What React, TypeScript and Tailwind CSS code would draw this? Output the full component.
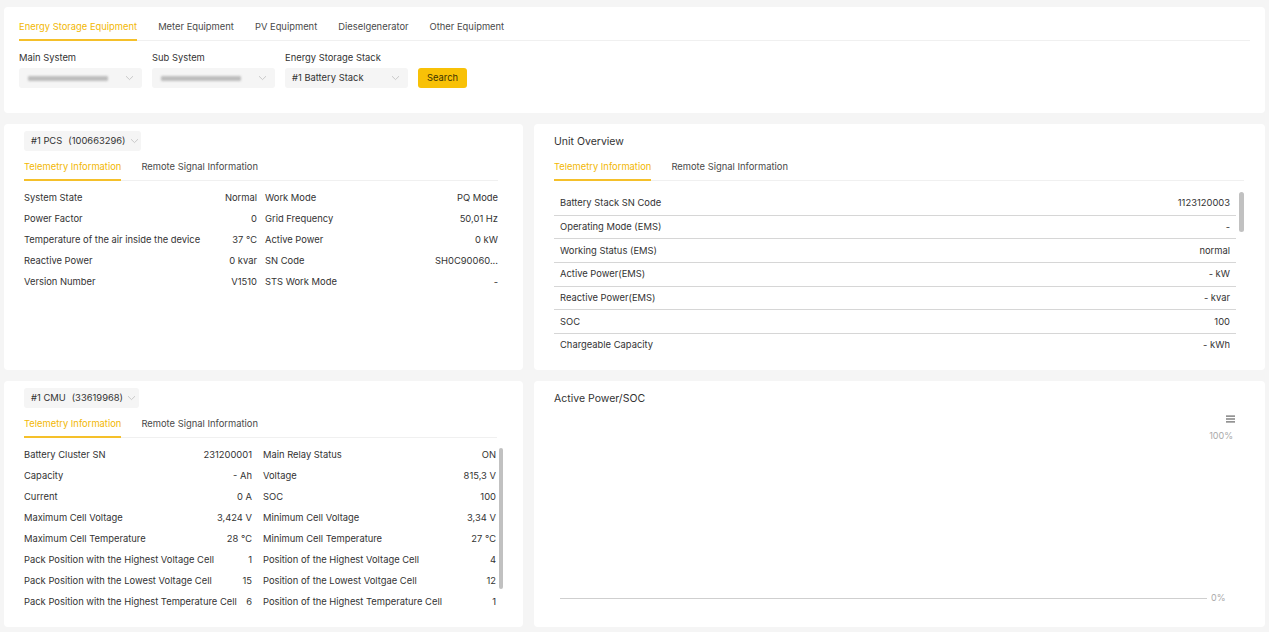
import React from "react";

const F = { fontFamily: "Inter, 'Noto Sans', sans-serif" };

function Chevron() {
  return (
    <svg width="9" height="6" viewBox="0 0 9 6" className="shrink-0">
      <path d="M1 1.2 L4.5 4.6 L8 1.2" fill="none" stroke="#c4c4c4" strokeWidth="0.9" />
    </svg>
  );
}

function Tabs({ items, active, gap = 20, className = "" }: { items: string[]; active: number; gap?: number; className?: string }) {
  return (
    <div className={"flex border-b border-[#f0f0f0] " + className} style={{ gap }}>
      {items.map((t, i) => (
        <div
          key={t}
          className={
            "pb-[6px] leading-[13px] text-[9.4px] whitespace-nowrap border-b-2 -mb-px " +
            (i === active ? "text-[#f2b705] border-[#f5c02a]" : "text-[#4a4a4a] border-transparent")
          }
        >
          {t}
        </div>
      ))}
    </div>
  );
}

function BlurSelect() {
  return (
    <div className="w-[123px] h-[20px] bg-[#f5f5f5] rounded-[3px] flex items-center justify-between pl-[9px] pr-[8px]">
      <div className="w-[80px] h-[5px] bg-[#bdbdbd] blur-[1.2px] rounded-[1px]" />
      <Chevron />
    </div>
  );
}

type Pair = [string, string];

function TwoCol({ rows, leftW, rightW, gap }: { rows: [Pair, Pair][]; leftW: number; rightW: number; gap: number }) {
  return (
    <div className="flex flex-col">
      {rows.map(([a, b], i) => (
        <div key={i} className="flex h-[21px] shrink-0 items-center text-[9.4px] text-[#333] whitespace-nowrap" style={{ gap }}>
          <div className="flex justify-between" style={{ width: leftW }}>
            <span>{a[0]}</span>
            <span>{a[1]}</span>
          </div>
          <div className="flex justify-between" style={{ width: rightW }}>
            <span>{b[0]}</span>
            <span>{b[1]}</span>
          </div>
        </div>
      ))}
    </div>
  );
}

function DeviceSelect({ name, code, w }: { name: string; code: string; w: number }) {
  return (
    <div
      className="flex h-[20px] bg-[#f5f5f5] rounded-[3px] items-center justify-between pl-[7px] pr-[8px] text-[9.4px] text-[#333] whitespace-nowrap"
      style={{ width: w }}
    >
      <span>
        {name}
        <span className="ml-[6px]">(</span>
        {code}
        <span className="mr-[4px]">)</span>
      </span>
      <Chevron />
    </div>
  );
}

export default function App() {
  const pcsRows: [Pair, Pair][] = [
    [["System State", "Normal"], ["Work Mode", "PQ Mode"]],
    [["Power Factor", "0"], ["Grid Frequency", "50,01 Hz"]],
    [["Temperature of the air inside the device", "37 ℃"], ["Active Power", "0 kW"]],
    [["Reactive Power", "0 kvar"], ["SN Code", "SH0C90060..."]],
    [["Version Number", "V1510"], ["STS Work Mode", "-"]],
  ];
  const cmuRows: [Pair, Pair][] = [
    [["Battery Cluster SN", "231200001"], ["Main Relay Status", "ON"]],
    [["Capacity", "- Ah"], ["Voltage", "815,3 V"]],
    [["Current", "0 A"], ["SOC", "100"]],
    [["Maximum Cell Voltage", "3,424 V"], ["Minimum Cell Voltage", "3,34 V"]],
    [["Maximum Cell Temperature", "28 ℃"], ["Minimum Cell Temperature", "27 ℃"]],
    [["Pack Position with the Highest Voltage Cell", "1"], ["Position of the Highest Voltage Cell", "4"]],
    [["Pack Position with the Lowest Voltage Cell", "15"], ["Position of the Lowest Voltgae Cell", "12"]],
    [["Pack Position with the Highest Temperature Cell", "6"], ["Position of the Highest Temperature Cell", "1"]],
  ];
  const unitRows: Pair[] = [
    ["Battery Stack SN Code", "1123120003"],
    ["Operating Mode (EMS)", "-"],
    ["Working Status (EMS)", "normal"],
    ["Active Power(EMS)", "- kW"],
    ["Reactive Power(EMS)", "- kvar"],
    ["SOC", "100"],
    ["Chargeable Capacity", "- kWh"],
  ];

  return (
    <div style={F} className="w-[1269px] h-[632px] bg-[#f5f5f5] px-[4px] pt-[7px] flex flex-col gap-[11px] overflow-hidden text-[#333]">
      {/* Top filter card */}
      <div className="h-[106px] bg-white rounded-[4px] px-[15px] pt-[13px] shrink-0">
        <Tabs
          items={["Energy Storage Equipment", "Meter Equipment", "PV Equipment", "Dieselgenerator", "Other Equipment"]}
          active={0}
          gap={21}
        />
        <div className="flex items-end gap-[10px] mt-[10px]">
          <div className="flex flex-col gap-[4px]">
            <div className="text-[9.4px] leading-[13px] text-[#333]">Main System</div>
            <BlurSelect />
          </div>
          <div className="flex flex-col gap-[4px]">
            <div className="text-[9.4px] leading-[13px] text-[#333]">Sub System</div>
            <BlurSelect />
          </div>
          <div className="flex flex-col gap-[4px]">
            <div className="text-[9.4px] leading-[13px] text-[#333]">Energy Storage Stack</div>
            <div className="w-[123px] h-[20px] bg-[#f5f5f5] rounded-[3px] flex items-center justify-between pl-[7px] pr-[8px] text-[9.4px] text-[#333] whitespace-nowrap">
              <span>#1 Battery Stack</span>
              <Chevron />
            </div>
          </div>
          <div className="w-[49px] h-[20px] bg-[#f8c107] rounded-[3px] flex items-center justify-center text-[9.4px] text-[#3d3300]">
            Search
          </div>
        </div>
      </div>

      {/* Middle row */}
      <div className="flex gap-[11px] h-[246px] shrink-0">
        <div className="w-[519px] bg-white rounded-[4px] pl-[20px] pr-[25px] pt-[7px]">
          <DeviceSelect name="#1 PCS" code="100663296" w={117} />
          <Tabs items={["Telemetry Information", "Remote Signal Information"]} active={0} gap={20} className="mt-[9px]" />
          <div className="mt-[7px]">
            <TwoCol rows={pcsRows} leftW={233} rightW={233} gap={8} />
          </div>
        </div>

        <div className="flex-1 bg-white rounded-[4px] pl-[20px] pr-[21px] pt-[11px] overflow-hidden">
          <div className="text-[10.5px] leading-[14px] text-[#333]">Unit Overview</div>
          <Tabs items={["Telemetry Information", "Remote Signal Information"]} active={0} gap={20} className="mt-[11px]" />
          <div className="flex gap-[3px] mt-[11px] h-[160px] overflow-hidden">
            <div className="flex-1 flex flex-col">
              {unitRows.map(([k, v]) => (
                <div key={k} className="h-[23.7px] shrink-0 flex items-center justify-between px-[6px] border-b border-[#d6d6d6] text-[9.4px] text-[#333]">
                  <span>{k}</span>
                  <span>{v}</span>
                </div>
              ))}
            </div>
            <div className="w-[5px] flex flex-col">
              <div className="h-[40px] bg-[#c1c1c1] rounded-[3px]" />
            </div>
          </div>
        </div>
      </div>

      {/* Bottom row */}
      <div className="flex gap-[11px] h-[246px] shrink-0">
        <div className="w-[519px] bg-white rounded-[4px] pl-[20px] pr-[20px] pt-[7px]">
          <DeviceSelect name="#1 CMU" code="33619968" w={115} />
          <div className="pr-[6px]">
            <Tabs items={["Telemetry Information", "Remote Signal Information"]} active={0} gap={20} className="mt-[9px]" />
          </div>
          <div className="flex mt-[7px] h-[164px] overflow-hidden">
            <div className="w-[472px]">
              <TwoCol rows={cmuRows} leftW={228} rightW={233} gap={11} />
            </div>
            <div className="ml-[3px] w-[4px] pt-[3px]">
              <div className="h-[141px] bg-[#c1c1c1] rounded-[2px]" />
            </div>
          </div>
        </div>

        <div className="flex-1 bg-white rounded-[4px] pl-[20px] pr-[32px] pt-[11px] flex flex-col">
          <div className="text-[10.5px] leading-[14px] text-[#333]">Active Power/SOC</div>
          <div className="flex justify-end mt-[9px] mr-[-2px]">
            <svg width="9" height="8" viewBox="0 0 9 8">
              <rect x="0" y="0.5" width="9" height="1.2" fill="#666" />
              <rect x="0" y="3.4" width="9" height="1.2" fill="#666" />
              <rect x="0" y="6.3" width="9" height="1.2" fill="#666" />
            </svg>
          </div>
          <div className="flex justify-end mt-[7px] text-[9px] leading-[12px] text-[#aaa]">100%</div>
          <div className="flex items-center mt-[150px] pl-[6px] gap-[4px]">
            <div className="flex-1 h-px bg-[#cfcfcf]" />
            <span className="text-[9px] leading-[12px] text-[#aaa] w-[22px]">0%</span>
          </div>
        </div>
      </div>
    </div>
  );
}
